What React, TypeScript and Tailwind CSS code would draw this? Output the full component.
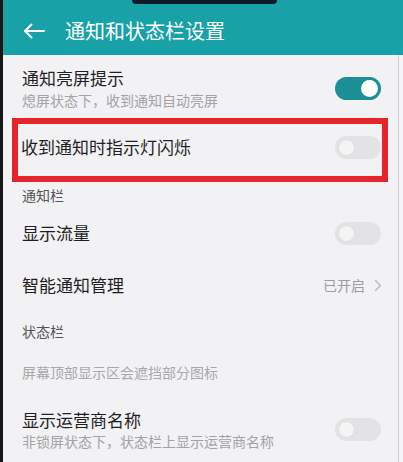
import React from 'react';

// Settings screen: notification & status bar, photographed on a phone

const FONT = "font-['Noto_Sans_CJK_SC','Noto_Sans',sans-serif]";

function Toggle({ on }: { on?: boolean }) {
  if (on) {
    return (
      <div className="w-[46px] h-[23px] rounded-full bg-[#1b8f96] flex items-center justify-end px-[3px] shrink-0">
        <div className="w-[17px] h-[17px] rounded-full bg-white" />
      </div>
    );
  }
  return (
    <div className="w-[46px] h-[23px] rounded-full bg-[#e3e2e5] flex items-center px-[3px] shrink-0">
      <div className="w-[17px] h-[17px] rounded-full bg-[#f4f4f5] border border-[#dedde0]" />
    </div>
  );
}

export default function App() {
  return (
    <div className={`w-[403px] h-[462px] overflow-hidden flex bg-[#f2f1f4] ${FONT}`}>
      {/* phone bezel */}
      <div className="w-[3px] shrink-0 bg-[#161616]" />

      <div className="flex-1 flex flex-col">
        {/* Header */}
        <div className="relative h-[55px] bg-[#18a1a7] flex items-center pt-[7px] shrink-0">
          <div className="absolute top-0 left-[129px] w-[145px] h-[4px] rounded-b-[4px] bg-[#0c1b2a]" />
          <svg className="ml-[20px] w-[22px] h-[16px]" viewBox="0 0 22 16" fill="none" stroke="#fff" strokeWidth={2} strokeLinecap="round" strokeLinejoin="round">
            <path d="M21 8H2M8.5 1.5L2 8l6.5 6.5" />
          </svg>
          <span className="ml-[20px] text-[20px] leading-none text-white">通知和状态栏设置</span>
        </div>

        <div className="flex-1 flex">
          <div className="flex-1 flex flex-col">
            {/* 通知亮屏提示 */}
            <div className="h-[63px] flex items-start pt-[12px] pl-[19px] pr-[17px] shrink-0">
              <div className="flex-1 flex flex-col">
                <span className="text-[17px] leading-[22px] text-[#1f1f1f]">通知亮屏提示</span>
                <span className="mt-[1px] text-[14px] leading-[20px] text-[#a3a3a6]">熄屏状态下，收到通知自动亮屏</span>
              </div>
              <div className="mt-[10px]">
                <Toggle on />
              </div>
            </div>

            {/* highlighted row */}
            <div className="ml-[9px] mr-[10px] h-[64px] border-[6px] border-[#e8242b] flex items-center pb-[6px] pl-[3px] pr-[1px] shrink-0">
              <span className="flex-1 text-[17px] leading-[22px] text-[#1f1f1f]">收到通知时指示灯闪烁</span>
              <Toggle />
            </div>

            {/* 通知栏 */}
            <div className="h-[26px] flex items-center pl-[19px] shrink-0">
              <span className="text-[14px] leading-[20px] text-[#555558]">通知栏</span>
            </div>

            <div className="h-[50px] flex items-center pl-[19px] pr-[17px] shrink-0">
              <span className="flex-1 text-[17px] leading-[22px] text-[#1f1f1f]">显示流量</span>
              <Toggle />
            </div>

            <div className="h-[54px] flex items-center pl-[19px] pr-[16px] shrink-0">
              <span className="flex-1 text-[17px] leading-[22px] text-[#1f1f1f]">智能通知管理</span>
              <span className="text-[14px] leading-[20px] text-[#9c9ca0]">已开启</span>
              <svg className="ml-[9px] w-[8px] h-[13px]" viewBox="0 0 8 13" fill="none" stroke="#b8b8bb" strokeWidth={1.4} strokeLinecap="round" strokeLinejoin="round">
                <path d="M1.5 1.5l5 5-5 5" />
              </svg>
            </div>

            {/* 状态栏 */}
            <div className="h-[38px] flex items-center pl-[19px] shrink-0">
              <span className="text-[14px] leading-[20px] text-[#555558]">状态栏</span>
            </div>

            <div className="h-[44px] flex items-center pl-[19px] shrink-0">
              <span className="text-[14px] leading-[20px] text-[#a8a8ab]">屏幕顶部显示区会遮挡部分图标</span>
            </div>

            <div className="flex-1 flex items-start pt-[15px] pl-[19px] pr-[17px]">
              <div className="flex-1 flex flex-col">
                <span className="text-[17px] leading-[22px] text-[#1f1f1f]">显示运营商名称</span>
                <span className="text-[14px] leading-[20px] text-[#a3a3a6]">非锁屏状态下，状态栏上显示运营商名称</span>
              </div>
              <div className="mt-[9px]">
                <Toggle />
              </div>
            </div>
          </div>

          {/* right edge of the screen */}
          <div className="w-[1px] shrink-0 bg-[#cfced2]" />
          <div className="w-[4px] shrink-0 bg-[#f5f4f7]" />
        </div>
      </div>
    </div>
  );
}
